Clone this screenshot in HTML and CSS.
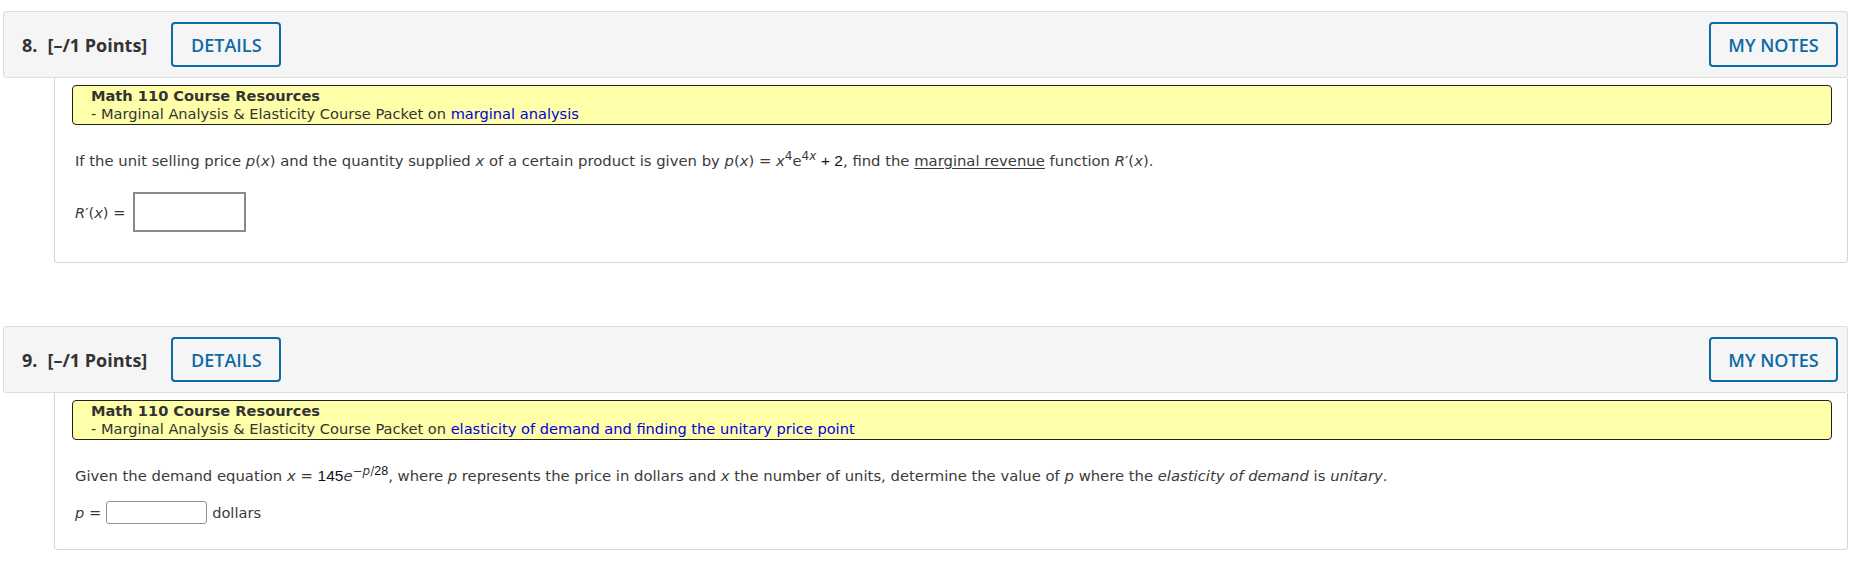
FILE: index.html
```html
<!DOCTYPE html>
<html lang="en">
<head>
<meta charset="utf-8">
<title>Questions</title>
<link rel="stylesheet" href="styles.css">
</head>
<body>
<div class="page">
  <section class="question">
    <header class="qhead">
      <span class="qnum">8.</span>
      <span class="qpts">[–/1 Points]</span>
      <button class="btn details">DETAILS</button>
      <span class="spacer"></span>
      <button class="btn notes">MY NOTES</button>
    </header>
    <div class="qbody">
      <div class="resources">
        <div class="res-title">Math 110 Course Resources</div>
        <div class="res-line">- Marginal Analysis &amp; Elasticity Course Packet on <a href="#" class="res-link">marginal analysis</a></div>
      </div>
      <p class="qtext">If the unit selling price <i>p</i>(<i>x</i>) and the quantity supplied <i>x</i> of a certain product is given by <i>p</i>(<i>x</i>) = <i>x</i><sup>4</sup>e<sup>4<i>x</i></sup> <span class="num">+ 2</span>, find the <span class="term">marginal revenue</span> function <i>R</i>′(<i>x</i>).</p>
      <div class="answer answer-big">
        <span class="alabel"><i>R</i>′(<i>x</i>) =</span>
        <span class="inbox big"></span>
      </div>
    </div>
  </section>

  <section class="question">
    <header class="qhead">
      <span class="qnum">9.</span>
      <span class="qpts">[–/1 Points]</span>
      <button class="btn details">DETAILS</button>
      <span class="spacer"></span>
      <button class="btn notes">MY NOTES</button>
    </header>
    <div class="qbody">
      <div class="resources">
        <div class="res-title">Math 110 Course Resources</div>
        <div class="res-line">- Marginal Analysis &amp; Elasticity Course Packet on <a href="#" class="res-link">elasticity of demand and finding the unitary price point</a></div>
      </div>
      <p class="qtext">Given the demand equation <i>x</i> = <span class="num">145</span><i>e</i><sup>−<i>p</i>/<span class="num">28</span></sup>, where <i>p</i> represents the price in dollars and <i>x</i> the number of units, determine the value of <i>p</i> where the <i>elasticity of demand</i> is <i>unitary</i>.</p>
      <div class="answer answer-small">
        <span class="alabel"><i>p</i> =</span>
        <span class="inbox small"></span>
        <span class="unit">dollars</span>
      </div>
    </div>
  </section>
</div>
</body>
</html>
```

FILE: styles.css
```css
html, body {
  margin: 0;
  padding: 0;
  background: #ffffff;
}

.page {
  padding: 11px 12px 0 3px;
}

.question {
  margin-bottom: 63px;
}

.question:last-child {
  margin-bottom: 0;
}

.qhead {
  display: flex;
  align-items: center;
  box-sizing: border-box;
  height: 67px;
  padding: 0 9px 0 18px;
  background: #f5f5f5;
  border: 1px solid #dcdcdc;
  border-radius: 3px;
  font-family: "Open Sans", "Noto Sans", sans-serif;
  color: #333333;
}

.qnum {
  font-weight: 700;
  font-size: 18px;
  margin-right: 10px;
}

.qpts {
  font-weight: 700;
  font-size: 18px;
  margin-right: 24px;
}

.spacer {
  flex: 1;
}

.btn {
  box-sizing: border-box;
  height: 45px;
  margin: 0;
  padding: 0;
  background: transparent;
  border: 2px solid #0e6aa5;
  border-radius: 4px;
  color: #0e6aa5;
  font-family: "Open Sans", "Noto Sans", sans-serif;
  font-weight: 600;
  font-size: 18px;
  white-space: nowrap;
  text-align: center;
}

.details {
  width: 110px;
}

.notes {
  width: 129px;
}

.qbody {
  margin-left: 51px;
  box-sizing: border-box;
  border: 1px solid #d4d4d4;
  border-top: none;
  border-radius: 0 0 4px 4px;
  padding: 7px 15px 0 17px;
  font-family: "DejaVu Sans", Verdana, sans-serif;
  font-size: 14.6px;
  color: #3a3a3a;
}

.resources {
  background: #ffffaa;
  border: 1px solid #222222;
  border-radius: 4px;
  padding: 1px 18px 1px 18px;
  line-height: 18px;
  color: #333333;
}

.res-title {
  font-weight: 700;
}

.res-link {
  color: #0000dd;
  text-decoration: none;
}

.qtext {
  margin: 27px 0 0 3px;
  line-height: 18px;
  font-size: 14.8px;
}

.qtext sup {
  font-size: 12px;
  line-height: 0;
  vertical-align: 6px;
}

.num {
  font-family: "Liberation Sans", Arial, sans-serif;
  font-size: 15.5px;
  color: #111111;
}

.qtext sup .num {
  font-size: 12.5px;
}

.term {
  text-decoration: underline;
  text-underline-offset: 2px;
}

.answer {
  display: flex;
  align-items: center;
  margin-left: 3px;
}

.answer-big {
  margin-top: 22px;
  padding-bottom: 30px;
}

.answer-small {
  margin-top: 16px;
  padding-bottom: 25px;
}

.alabel {
  margin-right: 5px;
}

.answer-big .alabel {
  margin-right: 8px;
}

.inbox {
  display: block;
  box-sizing: border-box;
  background: #ffffff;
}

.inbox.big {
  width: 113px;
  height: 40px;
  border: 2px solid #8a8a8a;
}

.inbox.small {
  width: 101px;
  height: 23px;
  border: 1px solid #8f8f9d;
  border-radius: 3px;
}

.unit {
  margin-left: 5px;
}
```
